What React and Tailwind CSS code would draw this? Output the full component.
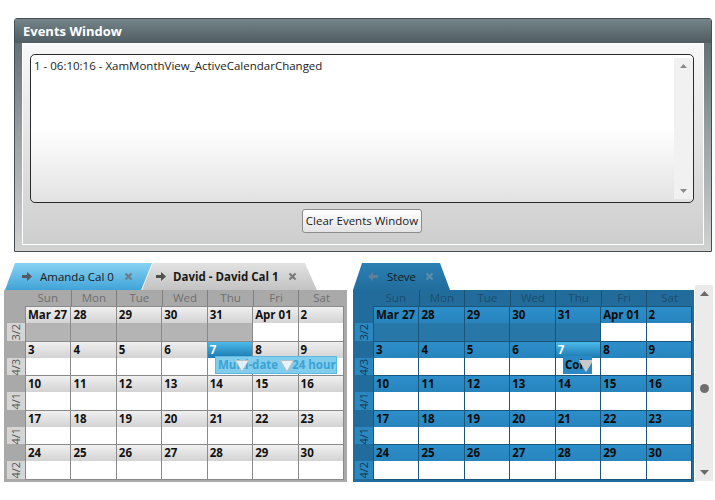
import React from 'react';

const DAYS = ['Sun', 'Mon', 'Tue', 'Wed', 'Thu', 'Fri', 'Sat'];

// each week: visible range label + [date text, is previous month]
const WEEKS = [
    { label: '3/2', days: [['Mar 27', true], ['28', true], ['29', true], ['30', true], ['31', true], ['Apr 01', false], ['2', false]] },
    { label: '4/3', days: [['3'], ['4'], ['5'], ['6'], ['7'], ['8'], ['9']] },
    { label: '4/1', days: [['10'], ['11'], ['12'], ['13'], ['14'], ['15'], ['16']] },
    { label: '4/1', days: [['17'], ['18'], ['19'], ['20'], ['21'], ['22'], ['23']] },
    { label: '4/2', days: [['24'], ['25'], ['26'], ['27'], ['28'], ['29'], ['30']] },
];

const THEMES = {
    gray: {
        frame: 'bg-[#a9a9a9]',
        headText: 'text-[#6f6f6f]',
        headLine: 'border-[#7f7f7f]',
        line: 'border-[#8a8a8a]',
        strip: 'bg-gradient-to-b from-[#f0f0f0] to-[#d3d3d3] text-[#111]',
        prevBody: 'bg-[#b4b4b4]',
        label: 'bg-[#d5d5d5] text-[#555]',
        weekW: 'w-[21px]',
        labelMl: 'ml-[3px]',
    },
    blue: {
        frame: 'bg-[#216c9b]',
        headText: 'text-[#1b4d70]',
        headLine: 'border-[#1a4f72]',
        line: 'border-[#1b557a]',
        strip: 'bg-gradient-to-b from-[#2d8fca] to-[#2784bd] text-[#0c0c0c]',
        prevBody: 'bg-[#2877a9]',
        label: 'bg-[#2a87c0] text-[#17384e]',
        weekW: 'w-[20px]',
        labelMl: 'ml-[2px]',
    },
};

const Arrow = ({ left, color }) => (
    <svg width="10" height="9" viewBox="0 0 10 9" className={left ? 'rotate-180' : ''}>
        <polygon points="0,3 5,3 5,0 10,4.5 5,9 5,6 0,6" fill={color} />
    </svg>
);

const Cross = ({ color }) => (
    <svg width="9" height="9" viewBox="0 0 9 9">
        <path d="M1.5 1.5 L7.5 7.5 M7.5 1.5 L1.5 7.5" stroke={color} strokeWidth="2.2" />
    </svg>
);

const Tri = ({ fill, stroke }) => (
    <svg width="14" height="12" viewBox="0 0 14 12">
        <polygon points="0.5,0.5 13.5,0.5 7,11.5" fill={fill} stroke={stroke} strokeWidth="1" />
    </svg>
);

const MonthGrid = ({ theme, children }) => {
    const t = THEMES[theme];
    return (
        <div className={`h-[192px] flex flex-col ${t.frame}`}>
            {/* day names */}
            <div className="flex h-[16px]">
                <div className={t.weekW} />
                <div className="grid grid-cols-7 w-[319px]">
                    {DAYS.map((d, i) => (
                        <div
                            key={d}
                            className={`text-center text-[11.5px] leading-[16px] ${t.headText} ${i > 0 ? `border-l ${t.headLine}` : ''}`}>
                            {d}
                        </div>
                    ))}
                </div>
            </div>
            <div className="flex">
                {/* week labels */}
                <div className={`${t.weekW} flex flex-col`}>
                    {WEEKS.map((w, i) => (
                        <div key={i} className="h-[34.6px] flex flex-col">
                            <div className="h-[17px]" />
                            <div className={`flex-1 ${t.labelMl} flex justify-center ${t.label}`}>
                                <span className="[writing-mode:vertical-rl] rotate-180 text-[11px] leading-[18px] whitespace-nowrap">
                                    {w.label}
                                </span>
                            </div>
                        </div>
                    ))}
                </div>
                {/* cells */}
                <div className={`relative grid grid-cols-7 grid-rows-[repeat(5,34.6px)] w-[319px] border-r border-b ${t.line}`}>
                    {WEEKS.map((w, wi) =>
                        w.days.map(([txt, prev]) => {
                            const today = txt === '7';
                            return (
                                <div key={wi + txt} className={`flex flex-col border-l border-t ${t.line}`}>
                                    <div
                                        className={`h-[16px] pl-[2px] text-[11.5px] font-bold leading-[16px] whitespace-nowrap ${
                                            today ? 'bg-gradient-to-b from-[#4cbaec] to-[#1a79ae] text-white' : t.strip
                                        }`}>
                                        {txt}
                                    </div>
                                    <div className={`flex-1 ${prev ? t.prevBody : 'bg-white'}`} />
                                </div>
                            );
                        })
                    )}
                    {children}
                </div>
            </div>
        </div>
    );
};

export default function App() {
    return (
        <div className="w-[715px] h-[500px] bg-white overflow-hidden font-['Open_Sans','Noto_Sans',sans-serif] text-[#1a1a1a]">
            {/* Events window */}
            <div className="ml-[14px] mt-[18px] w-[698px] h-[234px] flex flex-col border border-[#454f53] rounded-t-[3px] bg-gradient-to-b from-[#56646a] via-[#98a2a5] to-[#d2d2d2]">
                <div className="h-[24px] px-[8px] bg-gradient-to-b from-[#75858a] to-[#4f5c61] text-white font-bold text-[13px] leading-[24px]">
                    Events Window
                </div>
                <div className="flex-1 px-[7px] pb-[6px]">
                    <div className="h-full border border-white bg-gradient-to-b from-[#f8f8f8] to-[#cecece] pt-[10px] pl-[7px] pr-[9px]">
                        <div className="h-[149px] flex border border-[#2a2a2a] rounded-[5px] bg-gradient-to-b from-white via-white to-[#e2e2e2]">
                            <div className="flex-1 pl-[3px] pt-[3px] text-[11.5px] leading-[16px] text-[#222]">
                                1 - 06:10:16 - XamMonthView_ActiveCalendarChanged
                            </div>
                            <div className="w-[19px] my-[3px] bg-[#f1f1f1] flex flex-col items-center justify-between py-[6px]">
                                <svg width="7" height="4" viewBox="0 0 7 4"><polygon points="0,4 7,4 3.5,0" fill="#8a8a8a" /></svg>
                                <svg width="7" height="4" viewBox="0 0 7 4"><polygon points="0,0 7,0 3.5,4" fill="#8a8a8a" /></svg>
                            </div>
                        </div>
                        <button className="block mx-auto mt-[6px] w-[120px] h-[24px] border border-[#8c8c8c] rounded-[3px] bg-gradient-to-b from-white to-[#e4e4e4] text-[11.5px] text-[#1a1a1a]">
                            Clear Events Window
                        </button>
                    </div>
                </div>
            </div>

            {/* Calendars */}
            <div className="flex mt-[11px]">
                {/* left group */}
                <div className="ml-[4px] w-[343px]">
                    <div className="flex h-[27px]">
                        <div className="ml-[1px] w-[150px] flex items-center bg-gradient-to-b from-[#86d2f1] to-[#3fa3d7] [clip-path:polygon(10px_0,100%_0,100%_100%,0_100%)]">
                            <div className="ml-[17px]"><Arrow color="#505a60" /></div>
                            <span className="ml-[8px] text-[11.5px]">Amanda Cal 0</span>
                            <div className="ml-[10px]"><Cross color="#6b7f8a" /></div>
                        </div>
                        <div className="-ml-[14px] w-[176px] bg-[#f2f2f2] [clip-path:polygon(11px_0,calc(100%_-_12px)_0,100%_100%,0_100%)]">
                            <div className="h-full ml-[1px] flex items-center bg-gradient-to-b from-[#e2e2e2] to-[#c3c3c3] [clip-path:polygon(11px_0,calc(100%_-_12px)_0,100%_100%,0_100%)]">
                                <div className="ml-[14px]"><Arrow color="#505050" /></div>
                                <span className="ml-[7px] text-[11.5px] font-bold">David - David Cal 1</span>
                                <div className="ml-[9px]"><Cross color="#7a7a7a" /></div>
                            </div>
                        </div>
                    </div>
                    <MonthGrid theme="gray">
                        <div className="absolute left-[190px] top-[50px] w-[122px] h-[18px] bg-[#82cdec] border border-[#5db8e2] overflow-hidden">
                            <div className="absolute left-[2px] top-0 flex text-[11.5px] font-bold leading-[16px] text-[#3aa3d6] whitespace-nowrap">
                                <span>Multi-date</span>
                                <span className="ml-[14px]">24 hours</span>
                            </div>
                            <div className="absolute left-[19px] top-[3px]"><Tri fill="rgba(255,255,255,0.8)" stroke="#bfbfbf" /></div>
                            <div className="absolute left-[64px] top-[3px]"><Tri fill="rgba(255,255,255,0.8)" stroke="#bfbfbf" /></div>
                        </div>
                    </MonthGrid>
                </div>

                {/* right group */}
                <div className="ml-[6px] flex">
                    <div className="w-[341px]">
                        <div className="flex h-[27px]">
                            <div className="w-[97px] flex items-center bg-gradient-to-b from-[#2b80b4] to-[#216d9c] [clip-path:polygon(9px_0,calc(100%_-_10px)_0,100%_100%,0_100%)]">
                                <div className="ml-[15px]"><Arrow left color="#5f7f95" /></div>
                                <span className="ml-[9px] text-[11.5px] text-[#131b20]">Steve</span>
                                <div className="ml-[9px]"><Cross color="#5f8cab" /></div>
                            </div>
                        </div>
                        <MonthGrid theme="blue">
                            <div className="absolute left-[190px] top-[50px] w-[29px] h-[18px] bg-[#2a89c4] overflow-hidden">
                                <span className="absolute left-[2px] top-0 text-[11.5px] font-bold leading-[17px] text-[#0d0d0d]">Col</span>
                                <div className="absolute left-[16px] top-[4px]"><Tri fill="#c9c9c9" stroke="#c9c9c9" /></div>
                            </div>
                        </MonthGrid>
                    </div>
                    <div className="ml-[1px] mt-[22px] w-[18px] h-[196px] bg-[#ebebeb] flex flex-col items-center pt-[6px] pb-[6px]">
                        <svg width="9" height="5" viewBox="0 0 9 5"><polygon points="0,5 9,5 4.5,0" fill="#6a6a6a" /></svg>
                        <div className="mt-[88px] w-[9px] h-[9px] rounded-full bg-[#6e6e6e]" />
                        <div className="flex-1" />
                        <svg width="9" height="5" viewBox="0 0 9 5"><polygon points="0,0 9,0 4.5,5" fill="#6a6a6a" /></svg>
                    </div>
                </div>
            </div>
        </div>
    );
}
